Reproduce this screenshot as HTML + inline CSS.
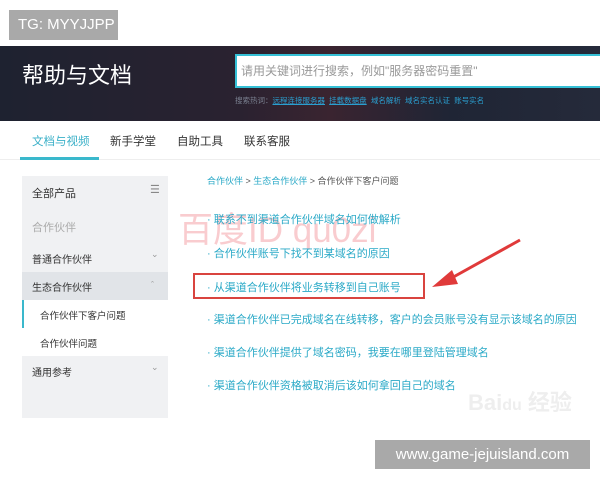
<!DOCTYPE html>
<html><head><meta charset="utf-8"><style>
*{margin:0;padding:0;box-sizing:border-box}
body{width:600px;height:480px;background:#fff;position:relative;overflow:hidden;font-family:"Liberation Sans","Noto Sans CJK SC",sans-serif}
.a{position:absolute;white-space:nowrap}
.hdr{left:0;top:46px;width:600px;height:75px;background:linear-gradient(90deg,#1e2230 0%,#2a2230 40%,#3a2430 55%,#1f2535 75%,#252a3a 100%)}
.lk{color:#2aa9c7;font-size:11px}
</style></head><body>
<div class="a" style="left:9px;top:10px;width:109px;height:30px;background:#a9a9a9;color:#fff;font-size:15px;line-height:30px;padding-left:9px">TG: MYYJJPP</div>
<div class="a hdr"></div>
<div class="a" style="left:22px;top:58px;color:#fff;font-size:22px">帮助与文档</div>
<div class="a" style="left:235px;top:54px;width:370px;height:34px;background:#fff;border:2px solid #35c0d6"></div>
<div class="a" style="left:241px;top:62px;color:#999;font-size:12px">请用关键词进行搜索，例如"服务器密码重置"</div>
<div class="a" style="left:235px;top:95px;font-size:7.5px;color:#7a8090">搜索热词：<span style="color:#2a9fd0;text-decoration:underline">远程连接服务器</span>&nbsp; <span style="color:#2a9fd0;text-decoration:underline">挂载数据盘</span>&nbsp; <span style="color:#2a9fd0">域名解析</span>&nbsp; <span style="color:#2a9fd0">域名实名认证</span>&nbsp; <span style="color:#2a9fd0">账号实名</span></div>
<div class="a" style="left:0;top:159px;width:600px;height:1px;background:#eee"></div>
<div class="a" style="left:32px;top:133px;font-size:11.5px;color:#3ab0c8">文档与视频</div>
<div class="a" style="left:110px;top:133px;font-size:11.5px;color:#333">新手学堂</div>
<div class="a" style="left:177px;top:133px;font-size:11.5px;color:#333">自助工具</div>
<div class="a" style="left:244px;top:133px;font-size:11.5px;color:#333">联系客服</div>
<div class="a" style="left:20px;top:157px;width:79px;height:3px;background:#3ab8cc"></div>
<div class="a" style="left:22px;top:176px;width:146px;height:242px;background:#f0f1f3"></div>
<div class="a" style="left:32px;top:185px;font-size:11px;color:#333">全部产品</div>
<div class="a" style="left:150px;top:183px;font-size:11px;color:#888">☰</div>
<div class="a" style="left:32px;top:219px;font-size:11px;color:#aaa">合作伙伴</div>
<div class="a" style="left:32px;top:251px;font-size:10px;color:#333">普通合作伙伴</div>
<div class="a" style="left:151px;top:249px;font-size:9px;color:#999">⌄</div>
<div class="a" style="left:22px;top:272px;width:146px;height:28px;background:#e1e4e8"></div>
<div class="a" style="left:32px;top:279px;font-size:10px;color:#333">生态合作伙伴</div>
<div class="a" style="left:151px;top:280px;font-size:9px;color:#999">ˆ</div>
<div class="a" style="left:22px;top:300px;width:146px;height:56px;background:#fff"></div>
<div class="a" style="left:22px;top:300px;width:2px;height:28px;background:#3ab8cc"></div>
<div class="a" style="left:40px;top:308px;font-size:9.5px;color:#333">合作伙伴下客户问题</div>
<div class="a" style="left:40px;top:336px;font-size:9.5px;color:#333">合作伙伴问题</div>
<div class="a" style="left:32px;top:364px;font-size:10px;color:#333">通用参考</div>
<div class="a" style="left:151px;top:362px;font-size:9px;color:#999">⌄</div>
<div class="a" style="left:207px;top:174px;font-size:9px;color:#555"><span style="color:#2aa9c7">合作伙伴</span> &gt; <span style="color:#2aa9c7">生态合作伙伴</span> &gt; 合作伙伴下客户问题</div>
<div class="a" style="left:178px;top:212px;font-size:35px;color:rgba(240,120,130,.38);line-height:38px">百度ID qu0zi</div>
<div class="a lk" style="left:207px;top:211px">· 联系不到渠道合作伙伴域名如何做解析</div>
<div class="a lk" style="left:207px;top:245px">· 合作伙伴账号下找不到某域名的原因</div>
<div class="a" style="left:193px;top:273px;width:232px;height:26px;border:2px solid #d9443f"></div>
<div class="a lk" style="left:207px;top:279px">· 从渠道合作伙伴将业务转移到自己账号</div>
<div class="a lk" style="left:207px;top:311px">· 渠道合作伙伴已完成域名在线转移，客户的会员账号没有显示该域名的原因</div>
<div class="a lk" style="left:207px;top:344px">· 渠道合作伙伴提供了域名密码，我要在哪里登陆管理域名</div>
<div class="a lk" style="left:207px;top:377px">· 渠道合作伙伴资格被取消后该如何拿回自己的域名</div>
<svg class="a" style="left:0;top:0" width="600" height="480"><path d="M520 240 L448 280" stroke="#e03a3a" stroke-width="3"/><path d="M432 287 L452 270 L458 284 Z" fill="#e03a3a"/></svg>
<div class="a" style="left:468px;top:385px;font-size:22px;color:#eeeeee;font-weight:bold">Bai<span style="font-size:16px">du</span> 经验</div>
<div class="a" style="left:375px;top:440px;width:215px;height:29px;background:#a9a9a9;color:#fff;font-size:15px;line-height:29px;text-align:center">www.game-jejuisland.com</div>
</body></html>
